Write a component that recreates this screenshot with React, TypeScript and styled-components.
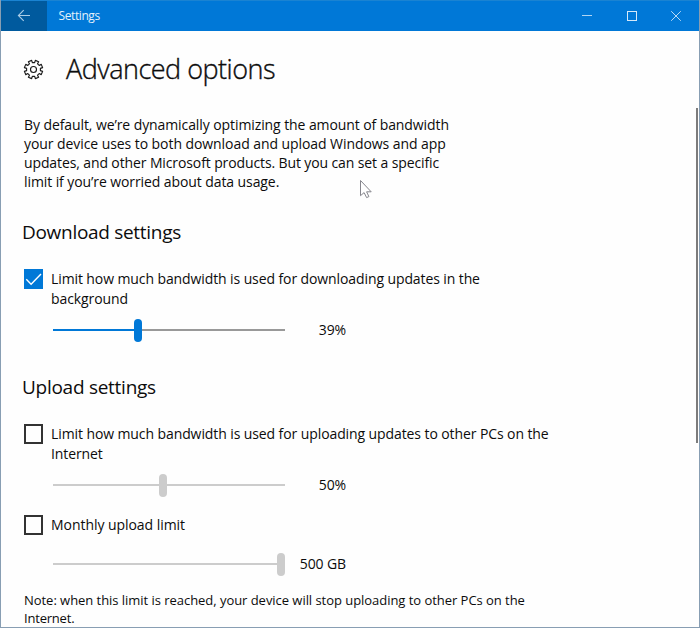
import React from "react";
import styled, { createGlobalStyle, css } from "styled-components";

const Global = createGlobalStyle`
  * { box-sizing: border-box; }
  html, body { margin: 0; padding: 0; overflow: hidden; }
  body { font-family: "Open Sans", "Noto Sans", sans-serif; color: #0c0c0c; }
`;

const Window = styled.div`
  position: relative;
  width: 700px;
  height: 628px;
  overflow: hidden;
  background: #fefefe;
  border: solid #889eb3;
  border-width: 0 1px 1px 1px;
`;

const TitleBar = styled.header`
  display: flex;
  height: 31px;
  background: #0078d7;
  color: #e4f1fb;
  border-top: 1px solid #1a83d2;
`;

const BackButton = styled.button`
  display: flex;
  width: 46px;
  height: 30px;
  padding: 0 0 2px 16px;
  align-items: center;
  border: 0;
  background: #005a9e;
`;

const WindowTitle = styled.span`
  flex: 1;
  padding-left: 11.5px;
  font-size: 12px;
  line-height: 30px;
  letter-spacing: -0.4px;
`;

const WindowButtons = styled.div`
  display: flex;
  width: 134px;
`;

const WindowButton = styled.button`
  display: flex;
  flex: 1;
  padding: 0;
  align-items: center;
  justify-content: center;
  border: 0;
  background: transparent;
`;

const Heading = styled.div`
  display: flex;
  height: 78px;
  padding-left: 22px;
  align-items: center;
`;

const GearIcon = styled.svg`
  margin-bottom: 1px;
`;

const PageTitle = styled.h1<{ $track: number }>`
  margin: -2px 0 0 22px;
  font-size: 27px;
  font-weight: 300;
  line-height: 40px;
  letter-spacing: ${(p) => p.$track}px;
  -webkit-text-stroke: 0.35px currentColor;
`;

const Content = styled.main`
  padding: 6px 0 0 23px;
`;

const Line = styled.span<{ $track?: number }>`
  display: block;
  width: max-content;
  white-space: pre;
  letter-spacing: ${(p) => p.$track ?? 0}px;
`;

const Intro = styled.p`
  margin: 0;
  height: 76px;
  font-size: 14px;
  line-height: 19px;
`;

const SectionTitle = styled.h2<{ $top: number; $track: number }>`
  margin: ${(p) => p.$top}px 0 0 -2px;
  font-size: 19px;
  font-weight: 400;
  line-height: 26px;
  letter-spacing: ${(p) => p.$track}px;
`;

const Option = styled.label<{ $top: number }>`
  display: flex;
  height: 38px;
  margin-top: ${(p) => p.$top}px;
  gap: 8px;
  font-size: 14px;
  line-height: 20px;
`;

const Box = styled.span<{ $checked?: boolean }>`
  display: flex;
  width: 19px;
  height: 20px;
  border: 2px solid #333;
  ${(p) => p.$checked && css`border: 0; background: #0078d7;`}
`;

const SliderRow = styled.div<{ $top: number }>`
  display: flex;
  height: 24px;
  margin: ${(p) => p.$top}px 0 0 29px;
  align-items: center;
`;

const Slider = styled.div`
  display: flex;
  width: 232px;
  align-items: center;
`;

const Track = styled.span<{ $color: string }>`
  height: 2px;
  background: ${(p) => p.$color};
`;

const Thumb = styled.span<{ $color: string }>`
  width: 8px;
  height: 23px;
  border-radius: 4px;
  background: ${(p) => p.$color};
`;

const Value = styled.output`
  width: 61px;
  text-align: right;
  font-size: 14px;
  line-height: 20px;
  letter-spacing: -0.12px;
`;

const Note = styled.p`
  margin: 15px 0 0;
  font-size: 13px;
  line-height: 18px;
`;

const ScrollThumb = styled.div`
  position: absolute;
  top: 108px;
  right: 1px;
  width: 2px;
  height: 335px;
  background: #7c7c7c;
`;

const Pointer = styled.svg`
  position: absolute;
  left: 358px;
  top: 179px;
`;

const Gear = () => {
  const pts: string[] = [];
  const n = 8;
  for (let i = 0; i < n; i++) {
    const c = (i * 360) / n + 22.5;
    [[-13, 7], [-11, 9.3], [11, 9.3], [13, 7]].forEach(([d, r]) => {
      const a = ((c + d) * Math.PI) / 180;
      pts.push(`${(10.5 + r * Math.cos(a)).toFixed(2)},${(10.5 + r * Math.sin(a)).toFixed(2)}`);
    });
  }
  return (
    <GearIcon width="21" height="21" viewBox="0 0 21 21" fill="none" stroke="#1a1a1a" strokeWidth="1.15" strokeLinejoin="round">
      <polygon points={pts.join(" ")} />
      <circle cx="10.5" cy="10.5" r="3" />
    </GearIcon>
  );
};

type SliderProps = { top: number; before: number; value: string; active?: boolean };

const SettingSlider = ({ top, before, value, active }: SliderProps) => (
  <SliderRow $top={top}>
    <Slider>
      <Track $color={active ? "#0078d7" : "#cccccc"} style={{ width: before }} />
      <Thumb $color={active ? "#0078d7" : "#cccccc"} />
      <Track $color={active ? "#999999" : "#cccccc"} style={{ width: 224 - before }} />
    </Slider>
    <Value>{value}</Value>
  </SliderRow>
);

export default function App() {
  return (
    <Window>
      <Global />
      <TitleBar>
        <BackButton aria-label="Back">
          <svg width="14" height="13" viewBox="0 0 14 13" fill="none" stroke="#a9cce6" strokeWidth="1.1">
            <path d="M13 6.5H1.5M6.7 1.2 1.4 6.5l5.3 5.3" />
          </svg>
        </BackButton>
        <WindowTitle>Settings</WindowTitle>
        <WindowButtons>
          <WindowButton aria-label="Minimize">
            <svg width="10" height="10" viewBox="0 0 10 10"><path d="M0 4.5h10" stroke="#b0d5f3" /></svg>
          </WindowButton>
          <WindowButton aria-label="Maximize">
            <svg width="10" height="10" viewBox="0 0 10 10"><rect x=".5" y=".5" width="9" height="9" fill="none" stroke="#d5e9f9" /></svg>
          </WindowButton>
          <WindowButton aria-label="Close">
            <svg width="11" height="10" viewBox="0 0 11 10"><path d="m.2.2 9.6 9.6M9.8.2.2 9.8" stroke="#b9daf5" /></svg>
          </WindowButton>
        </WindowButtons>
      </TitleBar>
      <Heading>
        <Gear />
        <PageTitle $track={-0.5}>Advanced options</PageTitle>
      </Heading>
      <Content>
        <Intro>
          <Line $track={-0.09}>By default, we’re dynamically optimizing the amount of bandwidth </Line>
          <Line $track={-0.07}>your device uses to both download and upload Windows and app </Line>
          <Line $track={-0.115}>updates, and other Microsoft products. But you can set a specific </Line>
          <Line $track={-0.09}>limit if you’re worried about data usage.</Line>
        </Intro>
        <SectionTitle $top={28} $track={-0.3}>Download settings</SectionTitle>
        <Option $top={24}>
          <Box $checked>
            <svg width="19" height="20" viewBox="0 0 19 20" fill="none" stroke="#fff" strokeWidth="1.4"><path d="m2.3 10.3 4.8 4.9L17 5" /></svg>
          </Box>
          <span>
            <Line $track={-0.1}>Limit how much bandwidth is used for downloading updates in the </Line>
            <Line $track={-0.1}>background</Line>
          </span>
        </Option>
        <SettingSlider top={11} before={80.5} value="39%" active />
        <SectionTitle $top={32} $track={-0.27}>Upload settings</SectionTitle>
        <Option $top={24}>
          <Box />
          <span>
            <Line $track={-0.095}>Limit how much bandwidth is used for uploading updates to other PCs on the </Line>
            <Line $track={-0.1}>Internet</Line>
          </span>
        </Option>
        <SettingSlider top={11} before={106} value="50%" />
        <Option $top={18}>
          <Box />
          <Line $track={-0.05}>Monthly upload limit</Line>
        </Option>
        <SettingSlider top={-1} before={224} value="500 GB" />
        <Note>
          <Line $track={-0.04}>Note: when this limit is reached, your device will stop uploading to other PCs on the </Line>
          <Line $track={-0.2}>Internet.</Line>
        </Note>
      </Content>
      <ScrollThumb />
      <Pointer width="14" height="20" viewBox="0 0 14 20">
        <path d="M1.5 1.5v15.2l3.6-3.1 2.5 5 2.3-1-2.3-4.8h4.6z" fill="#fff" stroke="#85858c" strokeWidth="1" />
      </Pointer>
    </Window>
  );
}
